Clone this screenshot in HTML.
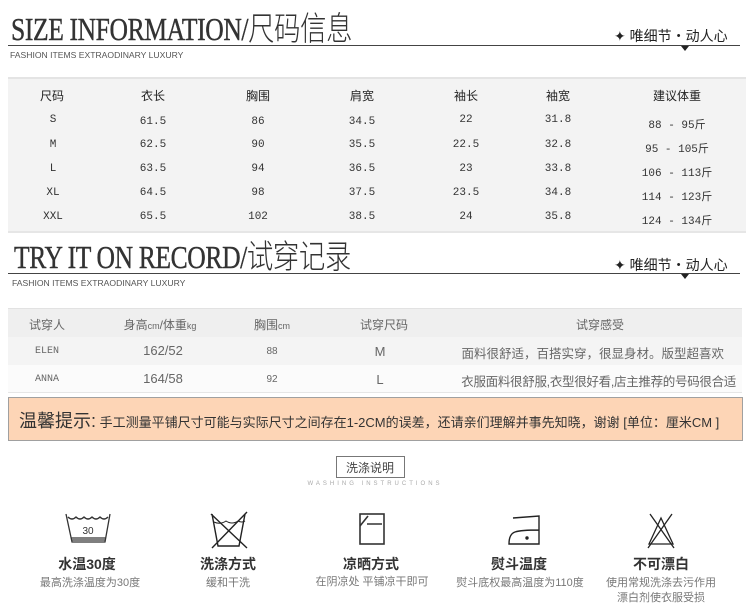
<!DOCTYPE html>
<html><head><meta charset="utf-8">
<style>
*{margin:0;padding:0;box-sizing:border-box}
body{width:750px;height:613px;background:#fff;position:relative;overflow:hidden;font-family:"Liberation Sans","Noto Sans CJK SC",sans-serif;color:#333}
.a{position:absolute;white-space:nowrap}
.ttl{font-family:"Liberation Serif","Noto Serif CJK SC",serif;font-size:32px;line-height:40px;color:#333;transform-origin:left top;transform:scaleX(0.8);letter-spacing:-0.5px;-webkit-text-stroke:0.4px #333}
.ttl span{font-family:"Noto Sans CJK SC",sans-serif;font-weight:300;font-size:33px;-webkit-text-stroke:0}
.line{position:absolute;left:8px;width:732px;height:1px;background:#444}
.sub{font-size:8.6px;color:#555}
.tag{font-size:14px;color:#222}
.tri{position:absolute;width:0;height:0;border-left:4px solid transparent;border-right:4px solid transparent;border-top:5px solid #222}
.c{position:absolute;transform:translateX(-50%);white-space:nowrap}
.t1{font-family:"Liberation Mono","Noto Sans CJK SC",monospace;font-size:11px;color:#333}
.h1{font-size:12px;color:#222}
.g{color:#666}
.icon{position:absolute}
.it{font-size:14px;font-weight:bold;color:#333}
.id{font-size:11px;color:#777;text-align:center;line-height:15px}
</style></head><body>

<div class="a ttl" style="left:11px;top:6px">SIZE INFORMATION/<span>尺码信息</span></div>
<div class="line" style="top:45px"></div>
<div class="a sub" style="left:10px;top:50px">FASHION ITEMS EXTRAODINARY LUXURY</div>
<div class="a tag" style="left:614px;top:26px">✦ 唯细节・动人心</div>
<div class="tri" style="left:681px;top:46px"></div>

<div class="a" style="left:8px;top:77px;width:738px;height:156px;background:#f3f3f3;border-top:2px solid #e4e4e4;border-bottom:2px solid #e6e6e6"></div>
<div class="c h1" style="left:52px;top:87px">尺码</div>
<div class="c h1" style="left:153px;top:87px">衣长</div>
<div class="c h1" style="left:258px;top:87px">胸围</div>
<div class="c h1" style="left:362px;top:87px">肩宽</div>
<div class="c h1" style="left:466px;top:87px">袖长</div>
<div class="c h1" style="left:558px;top:87px">袖宽</div>
<div class="c h1" style="left:677px;top:87px">建议体重</div>

<div class="c t1" style="left:53px;top:114px">S</div><div class="c t1" style="left:153px;top:116px">61.5</div><div class="c t1" style="left:258px;top:116px">86</div><div class="c t1" style="left:362px;top:116px">34.5</div><div class="c t1" style="left:466px;top:114px">22</div><div class="c t1" style="left:558px;top:114px">31.8</div><div class="c t1" style="left:677px;top:116px">88 - 95斤</div>
<div class="c t1" style="left:53px;top:139px">M</div><div class="c t1" style="left:153px;top:139px">62.5</div><div class="c t1" style="left:258px;top:139px">90</div><div class="c t1" style="left:362px;top:139px">35.5</div><div class="c t1" style="left:466px;top:139px">22.5</div><div class="c t1" style="left:558px;top:139px">32.8</div><div class="c t1" style="left:677px;top:140px">95 - 105斤</div>
<div class="c t1" style="left:53px;top:163px">L</div><div class="c t1" style="left:153px;top:163px">63.5</div><div class="c t1" style="left:258px;top:163px">94</div><div class="c t1" style="left:362px;top:163px">36.5</div><div class="c t1" style="left:466px;top:163px">23</div><div class="c t1" style="left:558px;top:163px">33.8</div><div class="c t1" style="left:677px;top:164px">106 - 113斤</div>
<div class="c t1" style="left:53px;top:187px">XL</div><div class="c t1" style="left:153px;top:187px">64.5</div><div class="c t1" style="left:258px;top:187px">98</div><div class="c t1" style="left:362px;top:187px">37.5</div><div class="c t1" style="left:466px;top:187px">23.5</div><div class="c t1" style="left:558px;top:187px">34.8</div><div class="c t1" style="left:677px;top:188px">114 - 123斤</div>
<div class="c t1" style="left:53px;top:211px">XXL</div><div class="c t1" style="left:153px;top:211px">65.5</div><div class="c t1" style="left:258px;top:211px">102</div><div class="c t1" style="left:362px;top:211px">38.5</div><div class="c t1" style="left:466px;top:211px">24</div><div class="c t1" style="left:558px;top:211px">35.8</div><div class="c t1" style="left:677px;top:212px">124 - 134斤</div>

<div class="a ttl" style="left:14px;top:234px">TRY IT ON RECORD/<span>试穿记录</span></div>
<div class="line" style="top:273px"></div>
<div class="a sub" style="left:12px;top:278px">FASHION ITEMS EXTRAODINARY LUXURY</div>
<div class="a tag" style="left:614px;top:255px">✦ 唯细节・动人心</div>
<div class="tri" style="left:681px;top:274px"></div>

<div class="a" style="left:8px;top:308px;width:734px;height:29px;background:#efefef;border-top:1px solid #e2e2e2"></div>
<div class="a" style="left:8px;top:337px;width:734px;height:28px;background:#f4f4f4"></div>
<div class="a" style="left:8px;top:365px;width:734px;height:28px;background:#fbfbfb;border-bottom:1px solid #e6e6e6"></div>
<div class="c h1 g" style="left:47px;top:316px">试穿人</div>
<div class="c h1 g" style="left:160px;top:316px">身高<small style="font-size:9px">cm</small>/体重<small style="font-size:9px">kg</small></div>
<div class="c h1 g" style="left:272px;top:316px">胸围<small style="font-size:9px">cm</small></div>
<div class="c h1 g" style="left:384px;top:316px">试穿尺码</div>
<div class="c h1 g" style="left:600px;top:316px">试穿感受</div>
<div class="c t1 g" style="left:47px;top:346px;font-size:10px">ELEN</div>
<div class="c g" style="left:163px;top:343px;font-size:13px">162/52</div>
<div class="c g" style="left:272px;top:346px;font-size:10px">88</div>
<div class="c g" style="left:380px;top:344px;font-size:13px">M</div>
<div class="a g" style="right:26px;top:343px;font-size:12.5px">面料很舒适，百搭实穿，很显身材。版型超喜欢</div>
<div class="c t1 g" style="left:47px;top:374px;font-size:10px">ANNA</div>
<div class="c g" style="left:163px;top:371px;font-size:13px">164/58</div>
<div class="c g" style="left:272px;top:374px;font-size:10px">92</div>
<div class="c g" style="left:380px;top:372px;font-size:13px">L</div>
<div class="a g" style="right:14px;top:371px;font-size:12.5px;letter-spacing:-0.3px">衣服面料很舒服,衣型很好看,店主推荐的号码很合适</div>

<div class="a" style="left:8px;top:397px;width:735px;height:44px;background:#fdd5b6;border:1px solid #a0a0a0"></div>
<div class="a" style="left:19px;top:407px;color:#333"><span style="font-size:18px">温馨提示:</span><span style="font-size:13px"> 手工测量平铺尺寸可能与实际尺寸之间存在1-2CM的误差，还请亲们理解并事先知晓，谢谢 [单位：厘米CM ]</span></div>

<div class="a" style="left:336px;top:456px;width:69px;height:22px;border:1px solid #777"></div>
<div class="c" style="left:370px;top:459px;font-size:12px;color:#444">洗涤说明</div>
<div class="c" style="left:375px;top:481px;font-size:6px;color:#aaa;letter-spacing:3px">WASHING INSTRUCTIONS</div>

<svg class="icon" style="left:60px;top:510px" width="56" height="36" viewBox="0 0 56 36" fill="none" stroke="#333" stroke-width="1.3">
<path d="M6 4 L12 32 L45 32 L50 4"/>
<path d="M8 7 Q12 11 16 7 Q20 11 24 7 Q28 11 32 7 Q36 11 40 7 Q44 11 48 7"/>
<path d="M11 28 L46 28 M12 30 L45 30" stroke-width="1.2"/>
<text x="28" y="24" font-size="10" fill="#333" stroke="none" text-anchor="middle" font-family="Liberation Sans">30</text>
</svg>
<svg class="icon" style="left:208px;top:510px" width="42" height="40" viewBox="0 0 42 40" fill="none" stroke="#222" stroke-width="1.4">
<path d="M4 4 L10 36 L31 36 L37 4"/><path d="M6 12 Q12 15 18 11 Q24 15 30 11 Q34 13 37 11" stroke-width="1"/>
<path d="M3 4 L39 38 M39 2 L4 38"/>
</svg>
<svg class="icon" style="left:358px;top:512px" width="32" height="36" viewBox="0 0 32 36" fill="none" stroke="#333" stroke-width="1.6">
<rect x="2" y="2" width="24" height="30"/><path d="M2 14 L10 4 M9 12 L24 12"/>
</svg>
<svg class="icon" style="left:505px;top:512px" width="46" height="36" viewBox="0 0 46 36" fill="none" stroke="#222" stroke-width="1.4">
<path d="M8 6 L34 4 L34 32 L4 32 Q4 22 10 20 Q16 18 34 18"/><circle cx="22" cy="26" r="1" fill="#222"/>
</svg>
<svg class="icon" style="left:644px;top:510px" width="34" height="40" viewBox="0 0 34 40" fill="none" stroke="#222" stroke-width="1.3">
<path d="M5 34 L17 8 L29 34 Z"/><path d="M6 4 L30 38 M28 4 L4 38"/>
</svg>

<div class="c it" style="left:87px;top:554px">水温30度</div>
<div class="c id" style="left:90px;top:576px">最高洗涤温度为30度</div>
<div class="c it" style="left:228px;top:554px">洗涤方式</div>
<div class="c id" style="left:228px;top:576px">缓和干洗</div>
<div class="c it" style="left:371px;top:554px">凉晒方式</div>
<div class="c id" style="left:372px;top:575px">在阴凉处 平铺凉干即可</div>
<div class="c it" style="left:519px;top:554px">熨斗温度</div>
<div class="c id" style="left:520px;top:576px">熨斗底权最高温度为110度</div>
<div class="c it" style="left:661px;top:554px">不可漂白</div>
<div class="c id" style="left:661px;top:576px">使用常规洗涤去污作用<br>漂白剂使衣服受损</div>
</body></html>
